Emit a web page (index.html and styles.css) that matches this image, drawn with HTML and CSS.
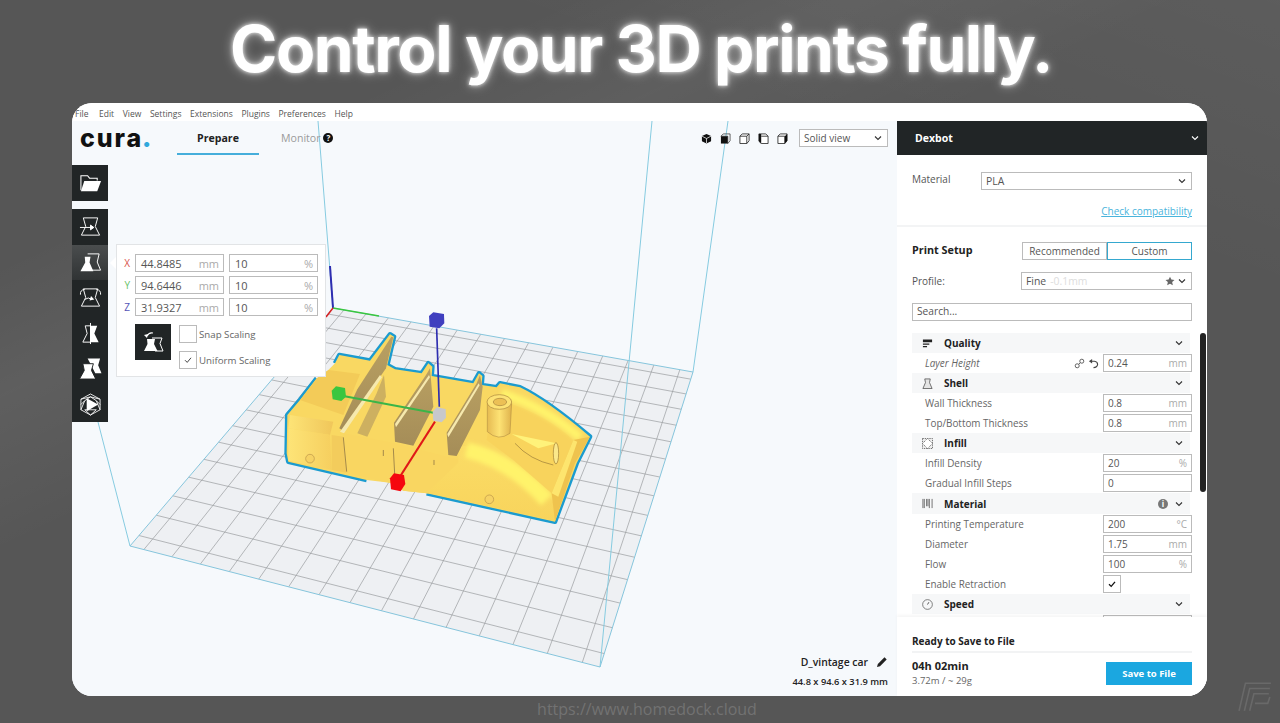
FILE: index.html
```html
<!DOCTYPE html>
<html lang="en">
<head>
    <meta charset="UTF-8">
    <meta name="viewport" content="width=device-width, initial-scale=1.0">
    <title>Control your 3D prints fully.</title>
    <link rel="stylesheet" href="styles.css">
    <script src="script.js" defer></script>
</head>
<body>
    <svg class="defs" width="0" height="0">
        <defs>
            <symbol id="chevron" viewBox="0 0 10 10"><path d="M2 3.500 5 6.500l3-3" fill="none" stroke="currentColor" stroke-width="1.100"/></symbol>
            <symbol id="flask" viewBox="0 0 24 24"><path d="M4.500 3h15L17 12l4.500 9h-19L7 12z" fill="none" stroke="#fff" stroke-width="1"/></symbol>
        </defs>
    </svg>

    <h1 class="headline">Control your 3D prints fully.</h1>

    <div class="app">
        <div class="menubar">
            <span>File</span><span>Edit</span><span>View</span><span>Settings</span><span>Extensions</span><span>Plugins</span><span>Preferences</span><span>Help</span>
        </div>
        <div class="workspace">
            <div class="viewport">
                <svg class="scene" viewBox="72 121 825 575" width="825" height="575">
                    <defs>
                        <linearGradient id="fender" x1="0" y1="0" x2="0" y2="1">
                            <stop offset="0" stop-color="#fbdc66"/>
                            <stop offset="1" stop-color="#f8d45c"/>
                        </linearGradient>
                        <linearGradient id="block" x1="0" y1="0" x2="1" y2="0">
                            <stop offset="0" stop-color="#fde477"/>
                            <stop offset="1" stop-color="#f6cf5f"/>
                        </linearGradient>
                        <linearGradient id="deck" x1="0" y1="0" x2="1" y2="0">
                            <stop offset="0" stop-color="#fde477"/>
                            <stop offset="1" stop-color="#f0c65a"/>
                        </linearGradient>
                        <linearGradient id="cyl" x1="0" y1="0" x2="1" y2="0">
                            <stop offset="0" stop-color="#e6bb52"/>
                            <stop offset="0.5" stop-color="#fde274"/>
                            <stop offset="1" stop-color="#dfb24c"/>
                        </linearGradient>
                        <linearGradient id="fin" x1="0" y1="0" x2="0" y2="1">
                            <stop offset="0" stop-color="#b9a062"/>
                            <stop offset="1" stop-color="#a58d58"/>
                        </linearGradient>
                        <filter id="soft" x="-30%" y="-30%" width="160%" height="160%"><feGaussianBlur stdDeviation="7"/></filter>
                        <clipPath id="bodyclip"><path d="M22 345 60 300 110 235 145 210 165 190 178 165 270 182 330 103 342 110 322 195 345 208 425 220 445 190 457 200 455 228 580 250 597 220 607 228 605 255 650 262 660 250 720 262Q800 300 930 410L890 490 825 665 440 580 370 572 330 548 260 540 25 485 20 460Z"/></clipPath>
                    </defs>

                    <polygon class="floor" points="130,546 600,667 693,372 333,308"/>
                    <g id="grid" class="grid"></g>
                    <polygon class="floor-edge" points="130,546 600,667 693,372 333,308"/>
                    <line class="volume" x1="130" y1="546" x2="98" y2="422"/>
                    <line class="volume" x1="333" y1="308" x2="318" y2="121"/>
                    <line class="volume" x1="600" y1="667" x2="652" y2="121"/>
                    <line class="volume" x1="693" y1="372" x2="728" y2="121"/>

                    <line class="axis-z" x1="330" y1="266" x2="333" y2="308"/>
                    <line class="axis-y" x1="333" y1="308" x2="379" y2="316"/>
                    <line class="axis-x" x1="333" y1="308" x2="326" y2="317"/>

                    <g transform="translate(280 300) scale(0.3333)">
                        <path class="outline" d="M165 190 178 165 270 182 330 103 342 110 322 195 345 208 425 220 445 190 457 200 455 228 580 250 597 220 607 228 605 255 650 262 660 250 720 262Q800 300 930 410L890 490 825 665 440 580M260 540 25 485 20 460 22 345 60 300 110 235"/>
                        <path class="body" d="M22 345 60 300 110 235 145 210 165 190 178 165 270 182 330 103 342 110 322 195 345 208 425 220 445 190 457 200 455 228 580 250 597 220 607 228 605 255 650 262 660 250 720 262Q800 300 930 410L890 490 825 665 440 580 370 572 330 548 260 540 25 485 20 460Z"/>
                        <g clip-path="url(#bodyclip)">
                            <path fill="#f3cb58" d="M110 235 145 210 240 222 190 345 60 300z"/>
                            <path fill="url(#deck)" d="M30 345 160 365 150 405 25 385z"/>
                            <path fill="url(#block)" d="M25 385 150 405 155 510 25 482z"/>
                            <path fill="#f3cc5c" d="M155 405 190 410 200 518 155 510z"/>
                            <path fill="#f9d661" d="M190 400 345 430 540 480 440 585 370 575 330 550 200 518z"/>
                            <path fill="url(#fender)" d="M535 440Q610 425 700 490 790 550 830 625L822 662 440 578 535 490z"/>
                            <path class="shine" d="M560 450Q690 480 800 600"/>
                            <path fill="#f8d35c" d="M650 300Q780 330 880 420L815 580 700 480 620 420 640 300z"/>
                            <path class="shine thin" d="M665 280Q790 320 900 412"/>
                            <path fill="#efc34e" d="M880 420 930 410 885 490 825 665 815 580z"/>
                            <path fill="#fde56e" d="M880 420 892 425 835 590 815 580z"/>
                        </g>

                        <path fill="url(#fin)" d="M334 110 340 112 318 205 190 392 178 385 232 268z"/>
                        <path fill="#cdb060" d="M312 225 318 290 262 410 232 400 290 280z"/>
                        <path fill="#f6e9ae" d="M180 395 300 225 306 232 192 400z"/>
                        <path fill="url(#fin)" d="M450 205 460 320 400 437 345 425 342 368 438 225z"/>
                        <path fill="#f6e9ae" d="M345 372 447 225 450 232 348 382z"/>
                        <path fill="url(#fin)" d="M600 225 608 260 600 330 530 468 505 465 500 398 590 250z"/>
                        <path fill="#f6e9ae" d="M502 402 596 250 599 256 505 412z"/>

                        <path fill="#f9d45c" d="M695 400 832 430 822 495Q740 480 690 425z"/>
                        <path fill="#fff27a" d="M695 402 830 430 775 445z"/>
                        <path fill="none" stroke="#a98a3f" stroke-width="2.500" d="M705 430Q750 480 820 495"/>
                        <ellipse cx="828" cy="460" rx="8" ry="32" fill="#fbe88a" stroke="#9d7c35" stroke-width="2"/>
                        <path fill="url(#cyl)" stroke="#a8843c" stroke-width="1.500" d="M622 310V395Q655 425 690 400L695 310z"/>
                        <ellipse cx="658" cy="306" rx="37" ry="22" fill="#fde274" stroke="#a8843c" stroke-width="2"/>
                        <ellipse cx="660" cy="306" rx="20" ry="11" fill="#ecc055" stroke="#a8843c" stroke-width="2"/>
                        <circle cx="90" cy="476" r="13" fill="#f6d264" stroke="#b99448" stroke-width="2"/>
                        <circle cx="628" cy="598" r="13" fill="#f6d264" stroke="#b99448" stroke-width="2"/>
                        <path class="seam" d="M190 412 200 515M340 445 345 540M310 450V468M462 480V495"/>

                        <line class="handle-z" x1="470" y1="85" x2="478" y2="320"/>
                        <line class="handle-y" x1="190" y1="288" x2="460" y2="338"/>
                        <line class="handle-x" x1="465" y1="365" x2="360" y2="530"/>
                        <path fill="#3f3fbf" d="M447 48 460 37 492 42 493 70 478 85 449 80z"/>
                        <path fill="#3ac63f" d="M155 272 168 259 195 264 198 290 184 303 158 298z"/>
                        <path fill="#f5070f" d="M330 535 342 520 372 525 376 552 362 574 333 568z"/>
                        <path fill="#c7c8cc" d="M458 335 470 322 497 327 498 353 485 367 460 362z"/>
                    </g>
                </svg>

                <div class="viewhead">
                    <div class="logo">cura<b>.</b></div>
                    <div class="tabs">
                        <div class="tab active">Prepare</div>
                        <div class="tab">Monitor <span class="helpdot">?</span></div>
                    </div>
                    <div class="viewicons">
                        <svg viewBox="0 0 12 12"><path d="M6 1 11 3.400V9L6 11.400 1 9V3.400z" fill="#111"/><path d="M1 3.400 6 6l5-2.600M6 6v5" fill="none" stroke="#fff" stroke-width=".8"/></svg>
                        <svg viewBox="0 0 12 12"><rect x="1" y="3.500" width="7.500" height="8" fill="#111"/><path d="M1 3.500 3.500 1H11V8.500L8.500 11.500V3.500z" fill="none" stroke="#333" stroke-width=".8"/></svg>
                        <svg viewBox="0 0 12 12"><path d="M1 3.500 3.500 1H11V8.500L8.500 11.500H1zM1 3.500H8.500V11.500M8.500 3.500 11 1" fill="#fff" stroke="#222" stroke-width=".9"/></svg>
                        <svg viewBox="0 0 12 12"><path d="M1 1H8.500L11 3.500V11.500H3.500L1 9z" fill="#fff" stroke="#222" stroke-width=".9"/><path d="M1 1H3.500V11.500L1 9z" fill="#111"/><path d="M3.500 3.500H11" stroke="#222" stroke-width=".9"/></svg>
                        <svg viewBox="0 0 12 12"><path d="M1 3.500 3.500 1H11V8.500L8.500 11.500H1zM1 3.500H8.500V11.500" fill="#fff" stroke="#222" stroke-width=".9"/><path d="M8.500 3.500 11 1V8.500L8.500 11.500z" fill="#111"/></svg>
                    </div>
                    <div class="select view-select">Solid view<svg class="chev"><use href="#chevron"/></svg></div>
                </div>

                <button class="toolbtn openbtn">
                    <svg viewBox="0 0 24 24"><path d="M2 20V5h7l2 2.500h8V10" fill="none" stroke="#fff" stroke-width="1.100"/><path d="M5.500 10.500H23L19 21H2z" fill="#fff"/></svg>
                </button>

                <div class="toolbar">
                    <button class="toolbtn">
                        <svg viewBox="0 0 24 24"><use href="#flask"/><path d="M1 13h14M12 10.500l3.500 2.500-3.500 2.500z" fill="#fff" stroke="#fff" stroke-width="1"/></svg>
                    </button>
                    <button class="toolbtn current">
                        <svg viewBox="0 0 24 24"><path d="M9 3H21L19 11.500 22.500 20H12" fill="none" stroke="#fff" stroke-width="1"/><path d="M6 6H12L11 12 15 21H1.500L6.500 12z" fill="#fff"/></svg>
                    </button>
                    <button class="toolbtn">
                        <svg viewBox="0 0 24 24"><use href="#flask"/><path d="M1.500 9Q1 4 6 3.500M22.500 9Q23 4 18 3.500" fill="none" stroke="#fff" stroke-width="1"/><path d="M6 14Q10 11 13 14" fill="none" stroke="#fff" stroke-width="1"/><path d="M12.500 10.500 16 14l-5 1z" fill="#fff"/></svg>
                    </button>
                    <button class="toolbtn">
                        <svg viewBox="0 0 24 24"><path d="M12 1V23" stroke="#fff" stroke-width="1"/><path d="M12 4H6.500L8.500 12 4 21H12z" fill="none" stroke="#fff" stroke-width="1"/><path d="M12 4H19L16 12 20.500 21H12z" fill="#fff"/></svg>
                    </button>
                    <button class="toolbtn">
                        <svg viewBox="0 0 24 24"><path d="M9 1.500H22L20 8.500 23.500 17H17L13 9z" fill="#fff"/><path d="M4 7H15L13 14 17.500 23H.5L5.500 14z" fill="#fff" stroke="#212526" stroke-width="1"/></svg>
                    </button>
                    <button class="toolbtn">
                        <svg viewBox="0 0 24 24"><path d="M12 1 22 6.500V17.500L12 23 2 17.500V6.500zM2 6.500 12 4 22 6.500M2 17.500 6 8 12 4 18 8 22 17.500M6 8 2 12M18 8 22 12M6 17.500 12 23 18 17.500z" fill="none" stroke="#fff" stroke-width=".9"/><path d="M8 5.500 20 12 8 19z" fill="#fff"/></svg>
                    </button>
                </div>

                <div class="scalepanel">
                    <div class="scalerows">
                        <span class="axis red">X</span>
                        <div class="field">44.8485<em>mm</em></div>
                        <div class="field pct">10<em>%</em></div>
                        <span class="axis green">Y</span>
                        <div class="field">94.6446<em>mm</em></div>
                        <div class="field pct">10<em>%</em></div>
                        <span class="axis blue">Z</span>
                        <div class="field">31.9327<em>mm</em></div>
                        <div class="field pct">10<em>%</em></div>
                    </div>
                    <div class="scaleopts">
                        <div class="resetbtn">
                            <svg viewBox="0 0 24 24"><path d="M11 8H21L19 13.500 22 21H14" fill="none" stroke="#fff" stroke-width="1"/><path d="M6 9H14L13 14 16.500 21H3L6.500 14z" fill="#fff"/><path d="M6 6Q8 2 12 3" fill="none" stroke="#fff" stroke-width="1.200"/><path d="M3 5l4-1-1 4z" fill="#fff"/></svg>
                        </div>
                        <div class="checks">
                            <label class="checkrow"><span class="checkbox"></span>Snap Scaling</label>
                            <label class="checkrow"><span class="checkbox"><svg viewBox="0 0 10 10"><path d="M2 5.200 4.200 7.400 8 2.800" fill="none" stroke="#444" stroke-width="1"/></svg></span>Uniform Scaling</label>
                        </div>
                    </div>
                </div>

                <div class="modelinfo">
                    <div class="modelname">D_vintage car
                        <svg viewBox="0 0 12 12"><path d="M1 11 1.800 8 8.500 1.300 10.700 3.500 4 10.200z" fill="#222"/></svg>
                    </div>
                    <div class="modelsize">44.8 x 94.6 x 31.9 mm</div>
                </div>
            </div>

            <aside class="sidebar">
                <div class="printer">Dexbot<svg class="chev"><use href="#chevron"/></svg></div>

                <div class="material">
                    <div class="material-row">
                        <span>Material</span>
                        <div class="select material-select">PLA<svg class="chev"><use href="#chevron"/></svg></div>
                    </div>
                    <a class="compat">Check compatibility</a>
                </div>

                <div class="setup">
                    <div class="setup-row">
                        <b>Print Setup</b>
                        <div class="modes">
                            <div class="mode">Recommended</div>
                            <div class="mode selected">Custom</div>
                        </div>
                    </div>
                    <div class="profile-row">
                        <span>Profile:</span>
                        <div class="select profile-select">Fine<i>-0.1mm</i>
                            <svg class="star" viewBox="0 0 12 12"><path d="M6 .8 7.600 4.300 11.400 4.700 8.600 7.300 9.400 11.100 6 9.200 2.600 11.100 3.400 7.300.6 4.700 4.400 4.300z" fill="#666"/></svg>
                            <svg class="chev"><use href="#chevron"/></svg>
                        </div>
                    </div>
                    <div class="search">Search...</div>
                </div>

                <div class="settings">
                    <div class="scrollbar"></div>
                    <div class="category">
                        <svg viewBox="0 0 12 12"><path d="M1 1.500h10v3H1zM1 6h7v1.300H1zM1 8.800h4.500v1.300H1z" fill="#222"/></svg>
                        <b>Quality</b><svg class="chev"><use href="#chevron"/></svg>
                    </div>
                    <div class="setting">
                        <span class="italic">Layer Height</span>
                        <span class="setting-icons">
                            <svg viewBox="0 0 12 12"><circle cx="3.500" cy="8.500" r="2.200" fill="none" stroke="#555" stroke-width="1"/><circle cx="8.500" cy="3.500" r="2.200" fill="none" stroke="#555" stroke-width="1"/><path d="M5 7 7 5" stroke="#555"/></svg>
                            <svg viewBox="0 0 12 12"><path d="M2.500 3.500H7Q10.500 4 10.500 7 10 10.500 6 10.500" fill="none" stroke="#444" stroke-width="1.200"/><path d="M1 3.500 4.500 1V6z" fill="#444"/></svg>
                        </span>
                        <div class="field">0.24<em>mm</em></div>
                    </div>
                    <div class="category">
                        <svg viewBox="0 0 12 12"><path d="M3 1h6l-.8 4 2.800 6.500H1L3.800 5z" fill="#e4e4e4" stroke="#444" stroke-width=".8"/></svg>
                        <b>Shell</b><svg class="chev"><use href="#chevron"/></svg>
                    </div>
                    <div class="setting"><span>Wall Thickness</span><div class="field">0.8<em>mm</em></div></div>
                    <div class="setting"><span>Top/Bottom Thickness</span><div class="field">0.8<em>mm</em></div></div>
                    <div class="category">
                        <svg viewBox="0 0 12 12"><rect x=".5" y=".5" width="11" height="11" fill="#eee" stroke="#666" stroke-dasharray="1.500 1"/><path d="M.5 6 6 .5 11.500 6 6 11.500z" fill="#fff" stroke="#666" stroke-dasharray="1.500 1"/></svg>
                        <b>Infill</b><svg class="chev"><use href="#chevron"/></svg>
                    </div>
                    <div class="setting"><span>Infill Density</span><div class="field">20<em>%</em></div></div>
                    <div class="setting"><span>Gradual Infill Steps</span><div class="field">0</div></div>
                    <div class="category cat-material">
                        <svg viewBox="0 0 12 12"><path d="M1 1V11M2.500 1V11M5 1V9M6.500 1V9M8 1V11M11 1V11" stroke="#444" stroke-width=".8"/></svg>
                        <b>Material</b>
                        <span class="infodot">i</span>
                        <svg class="chev"><use href="#chevron"/></svg>
                    </div>
                    <div class="setting"><span>Printing Temperature</span><div class="field">200<em>°C</em></div></div>
                    <div class="setting"><span>Diameter</span><div class="field">1.75<em>mm</em></div></div>
                    <div class="setting"><span>Flow</span><div class="field">100<em>%</em></div></div>
                    <div class="setting">
                        <span>Enable Retraction</span>
                        <div class="checkcell"><span class="checkbox"><svg viewBox="0 0 10 10"><path d="M2 5.200 4.200 7.400 8 2.800" fill="none" stroke="#111" stroke-width="1.300"/></svg></span></div>
                    </div>
                    <div class="category">
                        <svg viewBox="0 0 12 12"><circle cx="6" cy="6" r="5.300" fill="none" stroke="#555" stroke-width=".8"/><path d="M6 6 7.500 3.500" stroke="#333" stroke-width=".9"/></svg>
                        <b>Speed</b><svg class="chev"><use href="#chevron"/></svg>
                    </div>
                    <div class="setting cut"><div class="field"></div></div>
                </div>

                <div class="savebox">
                    <div class="ready">Ready to Save to File</div>
                    <div class="save-row">
                        <div>
                            <div class="duration">04h 02min</div>
                            <div class="usage">3.72m / ~ 29g</div>
                        </div>
                        <button class="savebtn">Save to File</button>
                    </div>
                </div>
            </aside>
        </div>
    </div>

    <div class="footer">
        <span class="url">https://www.homedock.cloud</span>
        <svg class="mark" viewBox="0 0 32 28"><path d="M1 27 7 1H31M6 27 11 6H30M11 27 15 11H29M16 20H28L30 14" fill="none" stroke="#696969" stroke-width="1.500"/></svg>
    </div>
</body>
</html>
```

FILE: styles.css
```css
* {
    box-sizing: border-box;
}
html, body {
    height: 100%;
}
body {
    margin: 0;
    overflow: hidden;
    font-family: "Open Sans", "Liberation Sans", sans-serif;
    color: #444;
    background-color: #565656;
    background-image:
        linear-gradient(155deg, rgba(255, 255, 255, 0) 20%, rgba(255, 255, 255, 0.05) 30%, rgba(255, 255, 255, 0) 42%),
        linear-gradient(200deg, rgba(255, 255, 255, 0.04) 0%, rgba(255, 255, 255, 0) 25%);
    display: flex;
    flex-direction: column;
}
.defs {
    position: absolute;
}
.headline {
    margin: 0;
    height: 103px;
    line-height: 98px;
    text-align: center;
    padding-left: 2px;
    font-family: Inter, "Liberation Sans", sans-serif;
    font-size: 64px;
    font-weight: 700;
    letter-spacing: -1.4px;
    color: #fff;
    text-shadow: 0 0 4px rgba(255, 255, 255, 0.9), 0 0 12px rgba(255, 255, 255, 0.55);
}
.app {
    margin-left: 72px;
    width: 1135px;
    height: 593px;
    flex: none;
    display: flex;
    flex-direction: column;
    border-radius: 20px;
    overflow: hidden;
    background: #f7f9fc;
}
.menubar {
    height: 20px;
    margin-bottom: -2px;
    flex: none;
    display: flex;
    gap: 8.6px;
    align-items: center;
    padding-left: 3px;
    background: #fff;
    font-size: 8.5px;
    color: #555;
}
.menubar span:first-child {
    margin-right: 2px;
}
.workspace {
    flex: 1;
    display: flex;
    min-height: 0;
    position: relative;
}
.viewport {
    position: relative;
    flex: 1;
    background: #f6f9fc;
}
.scene {
    position: absolute;
    left: 0;
    top: 0;
}
.floor {
    fill: #eef0f3;
}
.grid line {
    stroke: #9a9c9f;
    stroke-width: 0.7;
}
.floor-edge {
    fill: none;
    stroke: #86c5dc;
    stroke-width: 1;
}
.volume {
    stroke: #86cbe0;
    stroke-width: 1;
}
.axis-z, .handle-z {
    stroke: #2e2eb0;
    stroke-width: 2;
}
.axis-y {
    stroke: #3ac63f;
    stroke-width: 1.5;
}
.axis-x {
    stroke: #d92020;
    stroke-width: 1.5;
}
.handle-z {
    stroke-width: 5;
}
.handle-y {
    stroke: #3ab548;
    stroke-width: 6;
}
.handle-x {
    stroke: #e01818;
    stroke-width: 6;
}
.body {
    fill: #f9d862;
}
.outline {
    fill: none;
    stroke: #1b9bcf;
    stroke-width: 14;
    stroke-linejoin: round;
}
.shine {
    fill: none;
    stroke: #fff36a;
    stroke-width: 46;
    filter: url(#soft);
}
.shine.thin {
    stroke-width: 26;
}
.seam {
    fill: none;
    stroke: #a58a4a;
    stroke-width: 3;
}

/* viewport header */
.viewhead {
    position: relative;
    height: 34px;
    display: flex;
    align-items: center;
}
.logo {
    width: 105px;
    padding-left: 8px;
    font-family: Inter, sans-serif;
    font-size: 25px;
    font-weight: 800;
    letter-spacing: 1.9px;
    color: #111;
    line-height: 34px;
}
.logo b {
    color: #30a8dc;
    margin-left: -1px;
}
.tabs {
    display: flex;
    height: 34px;
}
.tab {
    width: 82px;
    line-height: 34px;
    text-align: center;
    font-size: 10.6px;
    color: #9b9b9b;
    white-space: nowrap;
}
.tab.active {
    font-weight: 700;
    color: #222;
    border-bottom: 2px solid #45aedb;
}
.tab + .tab {
    margin-left: 22px;
    text-align: left;
}
.helpdot, .infodot {
    display: inline-block;
    width: 10px;
    height: 10px;
    border-radius: 50%;
    background: #111;
    color: #fff;
    font-size: 8px;
    font-weight: 700;
    line-height: 10px;
    text-align: center;
    vertical-align: 1px;
}
.viewicons {
    margin-left: auto;
    display: flex;
    gap: 8px;
    margin-right: 11px;
}
.viewicons svg {
    width: 11px;
    height: 11px;
    display: block;
}
.select {
    display: flex;
    align-items: center;
    height: 18px;
    padding: 0 4px;
    background: #fff;
    border: 1px solid #bbb;
    font-size: 10.4px;
    color: #555;
}
.chev {
    width: 10px;
    height: 10px;
    margin-left: auto;
    flex: none;
    color: #333;
}
.view-select {
    width: 89px;
    margin-right: 9px;
    font-size: 10px;
}

/* left tools */
.toolbtn {
    display: flex;
    align-items: center;
    justify-content: center;
    width: 36px;
    height: 35.5px;
    padding: 0;
    border: none;
    background: #212526;
}
.toolbtn svg {
    width: 23px;
    height: 23px;
}
.toolbtn.current {
    background: linear-gradient(#4a4d4e, #303334);
}
.openbtn {
    position: absolute;
    left: 0;
    top: 44px;
}
.toolbar {
    position: absolute;
    left: 0;
    top: 88px;
}
.scalepanel {
    position: absolute;
    left: 44px;
    top: 123px;
    width: 210px;
    height: 133px;
    padding: 9px 8px 0 8px;
    background: #fff;
    border: 1px solid #e2e4e6;
}
.scalepanel::before {
    content: "";
    position: absolute;
    left: -7px;
    top: 12px;
    border: 6px solid transparent;
    border-left: none;
    border-right: 6px solid #fff;
}
.scalerows {
    display: grid;
    grid-template-columns: 11px 89px 89px;
    column-gap: 5px;
    row-gap: 4px;
    margin-left: -6px;
}
.axis {
    font-size: 10px;
    line-height: 18px;
    text-align: right;
}
.red {
    color: #d9534a;
}
.green {
    color: #67c267;
}
.blue {
    color: #5555b8;
}
.field {
    display: flex;
    justify-content: space-between;
    align-items: center;
    height: 18px;
    padding: 0 4px;
    background: #fff;
    border: 1px solid #bbb;
    font-size: 10px;
    color: #555;
}
.field em {
    font-style: normal;
    color: #aaa;
}
.scalerows .field {
    padding-left: 5px;
    font-size: 11px;
    line-height: 15px;
}
.scaleopts {
    display: flex;
    margin: 8px 0 0 10px;
    gap: 8px;
}
.resetbtn {
    width: 36px;
    height: 36px;
    display: flex;
    align-items: center;
    justify-content: center;
    background: #212526;
}
.resetbtn svg {
    width: 24px;
    height: 24px;
}
.checks {
    display: flex;
    flex-direction: column;
    gap: 8px;
    padding-top: 1px;
}
.checkrow {
    display: flex;
    align-items: center;
    gap: 2px;
    font-size: 9.7px;
    color: #666;
    white-space: nowrap;
}
.checkbox {
    display: flex;
    width: 18px;
    height: 18px;
    padding: 3px;
    border: 1px solid #bbb;
    background: #fff;
}
.modelinfo {
    position: absolute;
    right: 9px;
    bottom: 8px;
    text-align: right;
    color: #222;
}
.modelname {
    display: flex;
    justify-content: flex-end;
    align-items: center;
    gap: 8px;
    margin-bottom: 6px;
    font-size: 10.4px;
    font-weight: 600;
}
.modelname svg {
    width: 12px;
    height: 12px;
}
.modelsize {
    font-size: 9.3px;
    font-weight: 600;
}

/* sidebar */
.sidebar {
    width: 310px;
    flex: none;
    display: flex;
    flex-direction: column;
    position: relative;
    background: #fff;
}
.printer {
    display: flex;
    align-items: center;
    height: 34px;
    flex: none;
    padding: 0 7px 0 18px;
    background: #212526;
    color: #fff;
    font-size: 10.5px;
    font-weight: 700;
}
.printer .chev {
    color: #fff;
}
.material {
    height: 72px;
    flex: none;
    padding: 17px 15px 0;
    border-bottom: 2px solid #f3f4f5;
    font-size: 10px;
}
.material-row {
    display: flex;
    justify-content: space-between;
    color: #555;
}
.material-select {
    width: 211px;
}
.compat {
    display: block;
    margin-top: 14px;
    text-align: right;
    font-size: 10px;
    color: #4ab4dc;
    text-decoration: underline;
}
.setup {
    flex: none;
    height: 105px;
    padding: 0 15px;
    font-size: 10.8px;
}
.setup-row {
    display: flex;
    justify-content: space-between;
    align-items: center;
    padding-top: 15px;
}
.setup-row b {
    color: #222;
    margin-top: -4px;
}
.modes {
    display: flex;
    width: 170px;
}
.mode {
    flex: 1;
    height: 18px;
    line-height: 16px;
    text-align: center;
    font-size: 10px;
    border: 1px solid #bbb;
    color: #555;
}
.mode.selected {
    border: 1px solid #35a8cf;
}
.profile-row {
    display: flex;
    justify-content: space-between;
    align-items: center;
    margin-top: 12px;
    font-size: 10px;
    color: #555;
}
.profile-select {
    width: 171px;
}
.profile-select i {
    font-style: normal;
    color: #ddd;
    margin-left: 4px;
}
.star {
    width: 10px;
    height: 10px;
    margin-left: auto;
}
.profile-select .chev {
    margin-left: 2px;
}
.search {
    margin-top: 13px;
    height: 18px;
    line-height: 15px;
    padding-left: 4px;
    border: 1px solid #bbb;
    font-size: 10.2px;
    color: #555;
}
.settings {
    position: relative;
    flex: 1;
    overflow: hidden;
    padding: 0 15px;
    min-height: 0;
    margin-top: 1px;
}
.scrollbar {
    position: absolute;
    right: 1px;
    top: 0;
    width: 6px;
    height: 159px;
    border-radius: 3px;
    background: #222;
}
.category {
    display: flex;
    align-items: center;
    height: 20px;
    padding: 0 6px 0 10px;
    margin-right: 2px;
    background: #f6f7f8;
    font-size: 10px;
    color: #222;
}
.cat-material {
    height: 21px;
}
.category > svg:first-child {
    width: 11px;
    height: 11px;
    margin-right: 11px;
}
.category .chev {
    width: 10px;
}
.infodot {
    margin-left: auto;
    background: #777;
    margin-right: 6px;
    vertical-align: 0;
}
.infodot + .chev {
    margin-left: 0;
}
.setting {
    display: flex;
    align-items: center;
    height: 20px;
    padding-left: 13px;
    font-size: 9.9px;
    color: #666;
}
.setting .field, .checkcell {
    width: 89px;
    margin-left: auto;
}
.setting-icons + .field {
    margin-left: 4px;
}
.italic {
    font-style: italic;
}
.setting-icons {
    display: flex;
    gap: 3px;
    margin-left: auto;
}
.setting-icons svg {
    width: 11px;
    height: 11px;
}
.savebox {
    flex: none;
    height: 79px;
    padding: 0 15px;
    position: relative;
    background: #fff;
    box-shadow: 0 -2px 3px rgba(0, 0, 0, 0.04);
}
.ready {
    height: 36px;
    line-height: 48px;
    font-size: 10px;
    font-weight: 700;
    color: #222;
    border-bottom: 2px solid #f2f3f4;
}
.save-row {
    display: flex;
    justify-content: space-between;
    align-items: flex-start;
    margin-top: 6px;
}
.duration {
    font-size: 11px;
    line-height: 14px;
    font-weight: 700;
    color: #222;
}
.usage {
    margin-top: 1px;
    font-size: 9.5px;
    color: #666;
}
.savebtn {
    width: 86px;
    height: 23px;
    margin-top: 3px;
    border: none;
    background: #1ba7e0;
    color: #fff;
    font-family: inherit;
    font-size: 9.5px;
    font-weight: 700;
}

/* footer */
.footer {
    position: relative;
    flex: 1;
    text-align: center;
}
.url {
    display: block;
    padding-top: 3px;
    padding-left: 14px;
    font-size: 16px;
    line-height: 21px;
    color: #727272;
}
.mark {
    position: absolute;
    right: 8px;
    top: -14px;
    width: 34px;
    height: 30px;
}
```

FILE: script.js
```js
// bed grid: 15 x 15 lines, mapped on the floor quad with a homography
var quad = [[130, 546], [600, 667], [693, 372], [333, 308]];

function makeMap(p) {
    var dx1 = p[1][0] - p[2][0], dx2 = p[3][0] - p[2][0], sx = p[0][0] - p[1][0] + p[2][0] - p[3][0];
    var dy1 = p[1][1] - p[2][1], dy2 = p[3][1] - p[2][1], sy = p[0][1] - p[1][1] + p[2][1] - p[3][1];
    var den = dx1 * dy2 - dx2 * dy1;
    var g = (sx * dy2 - dx2 * sy) / den;
    var h = (dx1 * sy - sx * dy1) / den;
    var a = p[1][0] - p[0][0] + g * p[1][0];
    var b = p[3][0] - p[0][0] + h * p[3][0];
    var d = p[1][1] - p[0][1] + g * p[1][1];
    var e = p[3][1] - p[0][1] + h * p[3][1];
    return function (u, v) {
        var w = g * u + h * v + 1;
        return [(a * u + b * v + p[0][0]) / w, (d * u + e * v + p[0][1]) / w];
    };
}

var map = makeMap(quad);
var grid = document.getElementById("grid");

function addLine(from, to) {
    var line = document.createElementNS("http://www.w3.org/2000/svg", "line");
    line.setAttribute("x1", from[0]);
    line.setAttribute("y1", from[1]);
    line.setAttribute("x2", to[0]);
    line.setAttribute("y2", to[1]);
    grid.appendChild(line);
}

for (var i = 0; i < 15; i++) {
    var t = (i + 0.5) / 15;
    addLine(map(t, 0), map(t, 1));
    addLine(map(0, t), map(1, t));
}
```
